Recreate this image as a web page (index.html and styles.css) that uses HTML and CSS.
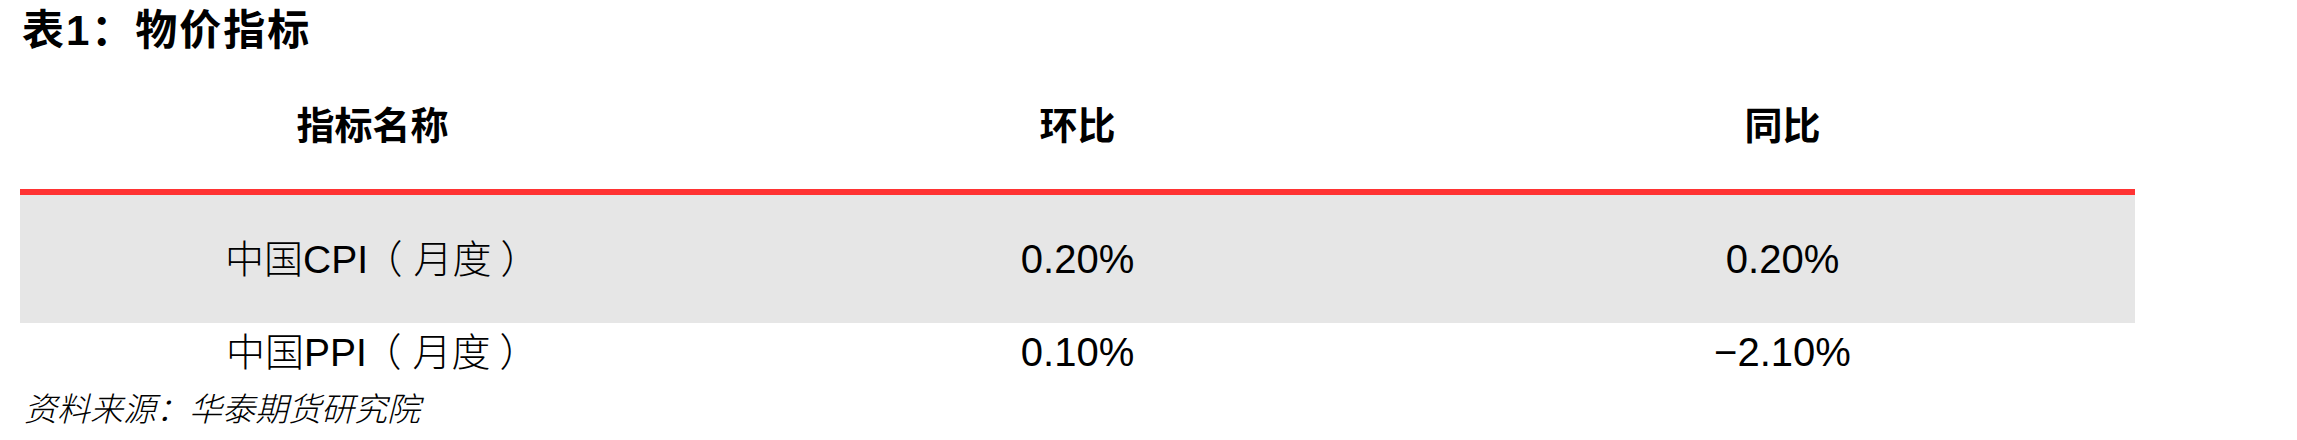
FILE: index.html
```html
<!DOCTYPE html>
<html lang="zh-CN">
<head>
<meta charset="utf-8">
<title>表1：物价指标</title>
<link rel="stylesheet" href="styles.css">
</head>
<body>
<div class="page">
  <h1 class="title">表1：物价指标</h1>
  <div class="table">
    <div class="row head">
      <div class="cell">指标名称</div>
      <div class="cell">环比</div>
      <div class="cell">同比</div>
    </div>
    <div class="row body shaded">
      <div class="cell label">中国CPI<span class="po">（</span>月度<span class="pc">）</span></div>
      <div class="cell num">0.20%</div>
      <div class="cell num">0.20%</div>
    </div>
    <div class="row body plain">
      <div class="cell label">中国PPI<span class="po">（</span>月度<span class="pc">）</span></div>
      <div class="cell num">0.10%</div>
      <div class="cell num">−2.10%</div>
    </div>
  </div>
  <p class="source">资料来源：华泰期货研究院</p>
</div>
</body>
</html>
```

FILE: styles.css
```css
html, body {
  margin: 0;
  padding: 0;
  background: #ffffff;
}

body {
  font-family: "Liberation Sans", "Noto Sans CJK SC", sans-serif;
  color: #000000;
}

.page {
  width: 2297px;
  height: 440px;
  overflow: hidden;
}

.title {
  margin: 0;
  height: 62px;
  padding-left: 22px;
  display: flex;
  align-items: center;
  font-size: 42px;
  font-weight: 700;
  line-height: 1;
  letter-spacing: 2px;
}

.table {
  width: 2115px;
  margin-left: 20px;
}

.row {
  display: grid;
  grid-template-columns: 705px 705px 705px;
}

.cell {
  display: flex;
  align-items: center;
  justify-content: center;
  line-height: 1;
  white-space: pre;
}

.head {
  height: 127px;
  border-bottom: 6px solid #ff3333;
}

.head .cell {
  font-size: 38px;
  font-weight: 700;
}

.shaded {
  height: 128px;
  background: #e6e6e6;
}

.plain {
  height: 58px;
}

.label {
  font-size: 39px;
  font-weight: 300;
}

.po,
.pc {
  font-feature-settings: "halt";
}

.po {
  margin-left: 15px;
  margin-right: 11px;
}

.pc {
  margin-left: 9px;
}

.num {
  font-size: 40px;
}

.source {
  margin: 0;
  padding-left: 24px;
  height: 56px;
  display: flex;
  align-items: center;
  font-size: 33px;
  font-style: italic;
  font-weight: 300;
  line-height: 1;
}
```
